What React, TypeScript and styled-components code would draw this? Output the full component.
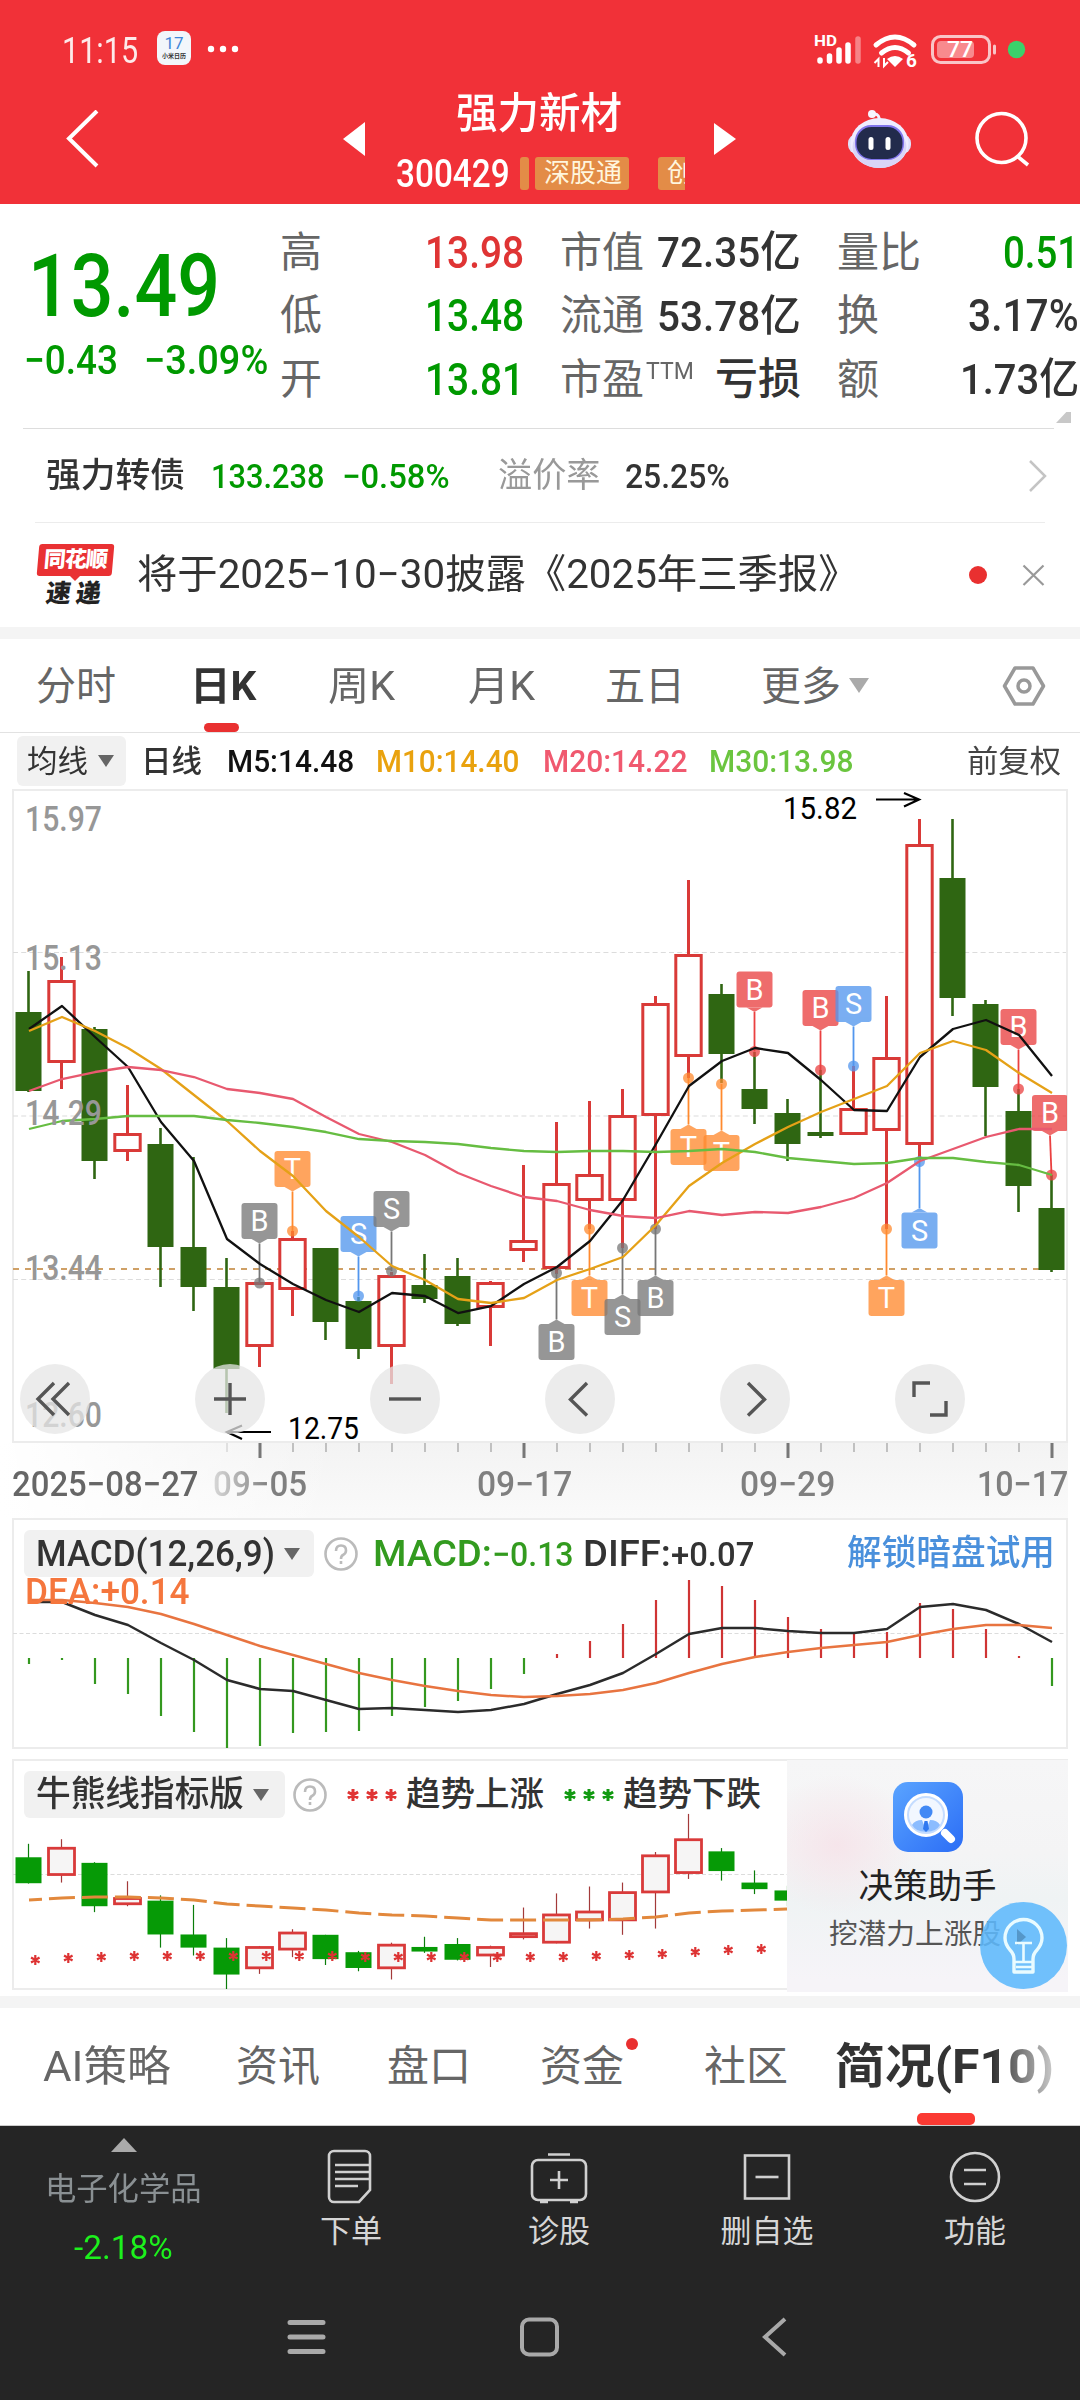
import React, { useLayoutEffect, useRef, useState } from "react";
import styled, { createGlobalStyle } from "styled-components";

const FONT = `Roboto, "Noto Sans CJK SC", sans-serif`;
const GREEN = "#009900";
const RED = "#df3434";
const INK = "#333333";
const GREY = "#666666";

const Global = createGlobalStyle`
  html, body { margin: 0; padding: 0; background: #fff; }
  * { box-sizing: border-box; }
  svg { display: block; flex: none; }
`;

/* ---------- text that is fitted to a fixed column width ---------- */

const FitBox = styled.span<{ $w: number; $size: number; $color?: string; $weight?: number; $ml?: number; $dy?: number }>`
  display: block;
  flex: none;
  width: ${(p) => p.$w}px;
  margin-left: ${(p) => p.$ml ?? 0}px;
  padding-top: ${(p) => (p.$dy && p.$dy > 0 ? p.$dy * 2 : 0)}px;
  padding-bottom: ${(p) => (p.$dy && p.$dy < 0 ? -p.$dy * 2 : 0)}px;
  font-size: ${(p) => p.$size}px;
  font-weight: ${(p) => p.$weight ?? 400};
  color: ${(p) => p.$color ?? "inherit"};
  line-height: 1;
  white-space: nowrap;
`;
const FitInner = styled.span`
  display: inline-block;
  transform-origin: 0 50%;
`;

type FitProps = {
  w: number;
  size: number;
  color?: string;
  weight?: number;
  ml?: number;
  dy?: number;
  children: React.ReactNode;
};

function Fit({ w, size, color, weight, ml, dy, children }: FitProps) {
  const ref = useRef<HTMLSpanElement>(null);
  const [scale, setScale] = useState(1);
  useLayoutEffect(() => {
    if (ref.current) setScale(w / ref.current.offsetWidth);
  }, [w, size, weight]);
  return (
    <FitBox $w={w} $size={size} $color={color} $weight={weight} $ml={ml} $dy={dy}>
      <FitInner ref={ref} style={{ transform: `scaleX(${scale})` }}>
        {children}
      </FitInner>
    </FitBox>
  );
}

/* ---------- shared layout ---------- */

const Screen = styled.div`
  width: 1080px;
  height: 2400px;
  overflow: hidden;
  display: flex;
  flex-direction: column;
  background: #fff;
  font-family: ${FONT};
  color: ${INK};
`;
const Line = styled.div<{ $h: number; $ml?: number; $w?: number; $c?: string }>`
  flex: none;
  height: ${(p) => p.$h}px;
  width: ${(p) => p.$w ?? 1080}px;
  margin-left: ${(p) => p.$ml ?? 0}px;
  background: ${(p) => p.$c ?? "#e2e2e2"};
`;
const Row = styled.div<{ $h: number; $pl?: number }>`
  flex: none;
  display: flex;
  align-items: center;
  height: ${(p) => p.$h}px;
  padding-left: ${(p) => p.$pl ?? 0}px;
`;
const Gap = styled.span<{ $w: number }>`
  flex: none;
  width: ${(p) => p.$w}px;
`;

/* ---------- header ---------- */

const Header = styled.header`
  flex: none;
  height: 204px;
  background: #f13138;
  color: #fff;
`;
const CalendarIcon = styled.span`
  display: flex;
  flex-direction: column;
  align-items: center;
  width: 34px;
  height: 34px;
  margin: 6px 0 0 19px;
  padding-top: 5px;
  border-radius: 8px;
  background: #f2f6fb;
  color: #3f86d8;
  font-size: 17px;
  line-height: 15px;
  small {
    color: #333;
    font-size: 6px;
    line-height: 9px;
    font-weight: 700;
  }
`;
const NavBar = styled.div`
  display: flex;
  height: 114px;
`;
const NavCell = styled.div<{ $w: number; $pl: number }>`
  display: flex;
  align-items: center;
  width: ${(p) => p.$w}px;
  height: 98px;
  padding-left: ${(p) => p.$pl}px;
`;
const TitleCol = styled.div`
  width: 304px;
`;
const TagStrip = styled.div`
  display: flex;
  width: 165px;
  height: 33px;
  margin-left: 10px;
  overflow: hidden;
`;
const Tag = styled.span<{ $w: number; $ml?: number; $pl?: number }>`
  flex: none;
  display: flex;
  align-items: center;
  width: ${(p) => p.$w}px;
  height: 33px;
  margin-left: ${(p) => p.$ml ?? 0}px;
  padding-left: ${(p) => p.$pl ?? 9}px;
  border-radius: 3px;
  background: #e38c47;
  color: #fff6de;
  font-size: 26px;
  line-height: 1;
  white-space: nowrap;
`;

function StatusBar() {
  return (
    <Row $h={90} $pl={62}>
      <Fit w={76} size={37} dy={5} color="#fdeaea">11:15</Fit>
      <CalendarIcon>17<small>小米日历</small></CalendarIcon>
      <Gap $w={16} />
      <svg width="34" height="90" viewBox="207 0 34 90" fill="#fff">
        <circle cx="211" cy="49" r="3.2" /><circle cx="223" cy="49" r="3.2" /><circle cx="235" cy="49" r="3.2" />
      </svg>
      <Gap $w={573} />
      <svg width="214" height="90" viewBox="814 0 214 90" fill="none">
        <text x="814" y="46" fontFamily="Roboto" fontSize="15" fontWeight="700" fill="#fff" textLength="23" lengthAdjust="spacingAndGlyphs">HD</text>
        <g stroke="#fff" strokeWidth="5.5" strokeLinecap="round">
          <path d="M820 60v1M829.500 56v5M839 50v11M848 45v16" />
          <path d="M858 39v22" opacity=".4" />
        </g>
        <g stroke="#fff" strokeWidth="5" strokeLinecap="round">
          <path d="M876 45q19-16 38 0" /><path d="M881.500 53q13.500-11 27 0" />
        </g>
        <path d="M887 59q8-6 16 0l-8 8z" fill="#fff" />
        <path d="M878.500 67v-8l-4 4M884 58v8l4-4" stroke="#fff" strokeWidth="2" />
        <text x="906" y="67" fontFamily="Roboto" fontSize="19" fontWeight="700" fill="#fff">6</text>
        <rect x="932.500" y="36.500" width="57" height="26" rx="8" stroke="#f9c5c7" strokeWidth="3" />
        <rect x="937" y="41" width="37" height="17" rx="4" fill="#f88a8e" />
        <path d="M994.500 46v7" stroke="#f9c5c7" strokeWidth="3" strokeLinecap="round" />
        <text x="947" y="57" fontFamily="Roboto" fontSize="22" fontWeight="500" fill="#fff" textLength="26" lengthAdjust="spacingAndGlyphs">77</text>
        <circle cx="1016.500" cy="49.500" r="8.700" fill="#3bd16b" />
      </svg>
    </Row>
  );
}

function Robot() {
  return (
    <svg width="64" height="62" viewBox="848 108 64 62">
      <path d="M879 121q1-7-5-7" stroke="#f3f0ff" strokeWidth="3" fill="none" />
      <circle cx="872" cy="114" r="4" fill="#f7f5ff" />
      <rect x="848" y="134" width="63" height="20" rx="9" fill="#dfe0fa" />
      <ellipse cx="879.500" cy="143" rx="29" ry="25" fill="#efedff" />
      <ellipse cx="879.500" cy="147" rx="27" ry="21" fill="#d9d5f7" />
      <rect x="855" y="125" width="49" height="35" rx="16" fill="#8175ec" />
      <rect x="856.500" y="127" width="46" height="32" rx="15" fill="#222b4c" />
      <rect x="868.500" y="137" width="5" height="13" rx="2.500" fill="#fff" />
      <rect x="885.500" y="137" width="5" height="13" rx="2.500" fill="#fff" />
    </svg>
  );
}

function TopHeader() {
  return (
    <Header>
      <StatusBar />
      <NavBar>
        <NavCell $w={343} $pl={65}>
          <svg width="34" height="58" viewBox="65 110 34 58" fill="none" stroke="#fff" strokeWidth="4">
            <path d="M97 111L69 138.500l28 27.500" />
          </svg>
        </NavCell>
        <NavCell $w={53} $pl={0}>
          <svg width="22" height="34" viewBox="0 0 22 30" preserveAspectRatio="none" fill="#fff"><path d="M22 0v30L0 15z" /></svg>
        </NavCell>
        <TitleCol>
          <Row $h={48} $pl={60}>
            <Fit w={166} size={42} weight={500}>强力新材</Fit>
          </Row>
          <Row $h={70}>
            <Fit w={114} size={38} weight={500} dy={1}>300429</Fit>
            <TagStrip>
              <Tag $w={9} />
              <Tag $w={94} $ml={6}>深股通</Tag>
              <Tag $w={94} $ml={29}>创业板</Tag>
            </TagStrip>
          </Row>
        </TitleCol>
        <NavCell $w={50} $pl={14}>
          <svg width="22" height="32" viewBox="0 0 22 30" preserveAspectRatio="none" fill="#fff"><path d="M0 0v30L22 15z" /></svg>
        </NavCell>
        <NavCell $w={224} $pl={98}><Robot /></NavCell>
        <NavCell $w={60} $pl={0}>
          <svg width="58" height="60" viewBox="974 110 58 60" fill="none" stroke="#fff" strokeWidth="3.600">
            <circle cx="1001.500" cy="139" r="24.500" /><path d="M1017 157l11 9" />
          </svg>
        </NavCell>
      </NavBar>
    </Header>
  );
}

/* ---------- quote ---------- */

const Quote = styled.section`
  flex: none;
  display: flex;
  height: 224px;
  padding-top: 17px;
`;
const PriceCol = styled.div`
  width: 280px;
  padding-top: 28px;
  color: ${GREEN};
`;
const MetricCol = styled.div<{ $w: number }>`
  flex: none;
  width: ${(p) => p.$w}px;
`;
const Metric = styled.div<{ $pr?: number }>`
  display: flex;
  align-items: center;
  justify-content: space-between;
  height: 63.5px;
  padding-right: ${(p) => p.$pr ?? 0}px;
`;
const Label = styled.span`
  display: flex;
  font-size: 42px;
  line-height: 1;
  color: ${GREY};
  white-space: nowrap;
`;

function QuotePanel() {
  return (
    <Quote>
      <PriceCol>
        <Row $h={72} $pl={28}><Fit w={192} size={87} weight={500} dy={1}>13.49</Fit></Row>
        <Row $h={75} $pl={24}>
          <Fit w={94} size={40} dy={2} weight={500}>−0.43</Fit>
          <Fit w={124} size={40} dy={2} weight={500} ml={26}>−3.09%</Fit>
        </Row>
      </PriceCol>
      <MetricCol $w={280}>
        <Metric $pr={36}><Label>高</Label><Fit w={99} size={44} weight={500} color={RED}>13.98</Fit></Metric>
        <Metric $pr={36}><Label>低</Label><Fit w={99} size={44} weight={500} color={GREEN}>13.48</Fit></Metric>
        <Metric $pr={36}><Label>开</Label><Fit w={99} size={44} weight={500} color={GREEN}>13.81</Fit></Metric>
      </MetricCol>
      <MetricCol $w={277}>
        <Metric $pr={36}><Label>市值</Label><Fit w={144} size={43} weight={500}>72.35亿</Fit></Metric>
        <Metric $pr={36}><Label>流通</Label><Fit w={144} size={43} weight={500}>53.78亿</Fit></Metric>
        <Metric $pr={36}><Label>市盈<Fit w={48} size={24} ml={2}>TTM</Fit></Label><Fit w={86} size={43} weight={500}>亏损</Fit></Metric>
      </MetricCol>
      <MetricCol $w={243}>
        <Metric $pr={1}><Label>量比</Label><Fit w={76} size={44} weight={500} color={GREEN}>0.51</Fit></Metric>
        <Metric $pr={1}><Label>换</Label><Fit w={111} size={44} weight={500}>3.17%</Fit></Metric>
        <Metric $pr={1}><Label>额</Label><Fit w={119} size={43} weight={500}>1.73亿</Fit></Metric>
        <svg width="240" height="16" viewBox="837 409 240 16"><path d="M1071 404v16h-15z" fill="#c8c8c8" /></svg>
      </MetricCol>
    </Quote>
  );
}

const Badge = styled.div`
  display: flex;
  flex-direction: column;
  align-items: center;
  width: 78px;
  height: 63px;
`;
const BadgeTop = styled.span`
  width: 75px;
  height: 32px;
  border-radius: 3px;
  background: #e93133;
  transform: skewX(-5deg);
  color: #fff;
  font-size: 22px;
  font-weight: 900;
  line-height: 31px;
  text-align: center;
  letter-spacing: -1px;
`;
const BadgeTip = styled.span`
  border: 5px solid transparent;
  border-top-color: #e93133;
  border-bottom-width: 0;
`;
const BadgeBottom = styled.span`
  margin: 0 0 0 2px;
  transform: skewX(-7deg);
  font-size: 25px;
  line-height: 26px;
  font-weight: 900;
  letter-spacing: 5px;
  color: #222;
`;

function InfoRows() {
  return (
    <>
      <Line $h={1} $ml={23} $w={1031} $c="#dddddd" />
      <Row $h={93} $pl={46}>
        <Fit w={139} size={34.500} weight={500}>强力转债</Fit>
        <Fit w={113} size={34} ml={26} weight={500} color={GREEN}>133.238</Fit>
        <Fit w={108} size={34} ml={18} weight={500} color={GREEN}>−0.58%</Fit>
        <Fit w={103} size={34.500} ml={48} color="#999">溢价率</Fit>
        <Fit w={105} size={34} ml={24} weight={500}>25.25%</Fit>
        <Gap $w={298} />
        <svg width="20" height="34" viewBox="0 0 20 34" fill="none" stroke="#c4c4c4" strokeWidth="2.500"><path d="M2 2l15 15L2 32" /></svg>
      </Row>
      <Line $h={1} $ml={35} $w={1010} $c="#ececec" />
      <Row $h={104} $pl={36}>
        <Badge><BadgeTop>同花顺</BadgeTop><BadgeTip /><BadgeBottom>速递</BadgeBottom></Badge>
        <Fit w={722} size={40} ml={23}>将于2025−10−30披露《2025年三季报》</Fit>
        <Gap $w={109} />
        <svg width="80" height="24" viewBox="968 562 80 24">
          <circle cx="978" cy="574" r="9" fill="#e93030" />
          <path d="M1023.500 564.500l20 19.500M1043.500 564.500l-20 19.500" stroke="#999" strokeWidth="2.200" />
        </svg>
      </Row>
    </>
  );
}

/* ---------- period tabs and averages ---------- */

const TabRow = styled.nav`
  position: relative;
  flex: none;
  display: flex;
  align-items: center;
  height: 93px;
  padding-left: 36px;
  color: ${GREY};
`;
const Underline = styled.i<{ $x: number; $w: number; $h: number; $c: string }>`
  position: absolute;
  bottom: 0;
  left: ${(p) => p.$x}px;
  width: ${(p) => p.$w}px;
  height: ${(p) => p.$h}px;
  border-radius: 5px;
  background: ${(p) => p.$c};
`;
const Picker = styled.button<{ $w: number; $h: number; $pl?: number }>`
  flex: none;
  display: flex;
  align-items: center;
  width: ${(p) => p.$w}px;
  height: ${(p) => p.$h}px;
  padding: 0 0 0 ${(p) => p.$pl ?? 12}px;
  border: 0;
  border-radius: 6px;
  background: #f1f1f1;
  color: ${INK};
  font-family: ${FONT};
  text-align: left;
`;
const Caret = styled.i<{ $c?: string; $s?: number; $ml?: number }>`
  flex: none;
  margin-left: ${(p) => p.$ml ?? 10}px;
  border-left: ${(p) => p.$s ?? 8}px solid transparent;
  border-right: ${(p) => p.$s ?? 8}px solid transparent;
  border-top: ${(p) => (p.$s ?? 8) * 1.5}px solid ${(p) => p.$c ?? "#666"};
`;

function PeriodTabs() {
  return (
    <TabRow>
      <Fit w={80} size={40} dy={1}>分时</Fit>
      <Fit w={66} size={40} dy={1} weight={700} ml={74} color={INK}>日K</Fit>
      <Fit w={67} size={40} dy={1} ml={72}>周K</Fit>
      <Fit w={67} size={40} dy={1} ml={73}>月K</Fit>
      <Fit w={80} size={40} dy={1} ml={70}>五日</Fit>
      <Fit w={80} size={40} dy={1} ml={76}>更多</Fit>
      <Caret $c="#aaa" $s={10} $ml={8} />
      <Gap $w={132} />
      <svg width="46" height="44" viewBox="0 0 46 44" fill="none" stroke="#999" strokeWidth="3.500">
        <path d="M14 4h18l10.500 18L32 40H14L3.500 22z" strokeLinejoin="round" /><circle cx="23" cy="22" r="6" />
      </svg>
      <Underline $x={204} $w={35} $h={9} $c="#e93030" />
    </TabRow>
  );
}

function AverageRow() {
  return (
    <Row $h={56} $pl={17}>
      <Picker $w={109} $h={50} $pl={10}><Fit w={61} size={31}>均线</Fit><Caret /></Picker>
      <Fit w={61} size={31} weight={500} ml={15}>日线</Fit>
      <Fit w={127} size={32} weight={500} ml={25} color="#111">M5:14.48</Fit>
      <Fit w={143} size={32} weight={500} ml={22} color="#e9a20e">M10:14.40</Fit>
      <Fit w={144} size={32} weight={500} ml={24} color="#f0596f">M20:14.22</Fit>
      <Fit w={144} size={32} weight={500} ml={22} color="#6bc53f">M30:13.98</Fit>
      <Fit w={94} size={31} ml={114} color="#444">前复权</Fit>
    </Row>
  );
}

/* ---------- candle chart ---------- */

const cx = (i: number) => 28.5 + 33 * i;

/* rising flag, high, body top, body bottom, low */
const CANDLES: [number, number, number, number, number][] = [
  [0, 971, 1012, 1091, 1092], [1, 957, 980, 1063, 1089], [0, 1027, 1029, 1161, 1179], [1, 1085, 1133, 1152, 1161],
  [0, 1128, 1144, 1247, 1287], [0, 1157, 1247, 1287, 1311], [0, 1258, 1287, 1369, 1413], [1, 1282, 1282, 1347, 1367],
  [1, 1231, 1238, 1290, 1316], [0, 1248, 1248, 1322, 1340], [0, 1297, 1301, 1349, 1359], [1, 1272, 1275, 1347, 1384],
  [0, 1254, 1285, 1299, 1303], [0, 1258, 1276, 1324, 1326], [1, 1281, 1282, 1308, 1346], [1, 1165, 1240, 1251, 1262],
  [1, 1122, 1183, 1269, 1274], [1, 1101, 1174, 1201, 1229], [1, 1089, 1115, 1201, 1248], [1, 996, 1003, 1116, 1229],
  [1, 880, 954, 1057, 1078], [0, 984, 994, 1054, 1083], [0, 1052, 1089, 1109, 1124], [0, 1099, 1113, 1144, 1161],
  [0, 1070, 1132, 1136, 1138], [1, 1066, 1108, 1135, 1135], [1, 996, 1057, 1131, 1229], [1, 819, 844, 1145, 1160],
  [0, 819, 878, 998, 1016], [0, 1000, 1004, 1087, 1136], [0, 1089, 1111, 1186, 1212], [0, 1175, 1208, 1270, 1272],
];
const M5 = [1029, 1006, 1037, 1067, 1122, 1161, 1239, 1264, 1284, 1300, 1312, 1293, 1296, 1313, 1306, 1284, 1267, 1241, 1200, 1144, 1086, 1061, 1048, 1053, 1080, 1110, 1111, 1057, 1029, 1020, 1035, 1076];
const M10 = [1031, 1017, 1031, 1048, 1069, 1095, 1121, 1151, 1176, 1211, 1237, 1266, 1280, 1299, 1303, 1298, 1280, 1269, 1257, 1225, 1186, 1163, 1144, 1127, 1112, 1099, 1086, 1053, 1041, 1050, 1073, 1093];
const M20 = [1091, 1079, 1072, 1067, 1070, 1077, 1089, 1093, 1099, 1117, 1134, 1142, 1155, 1173, 1186, 1197, 1201, 1210, 1216, 1218, 1211, 1215, 1212, 1213, 1207, 1198, 1183, 1161, 1149, 1137, 1129, 1129];
const M30 = [1129, 1121, 1119, 1116, 1116, 1116, 1120, 1123, 1127, 1132, 1139, 1141, 1142, 1144, 1148, 1151, 1152, 1151, 1151, 1152, 1151, 1149, 1152, 1158, 1161, 1164, 1163, 1158, 1158, 1162, 1165, 1175];

const PINS: [number, string, string, number, boolean][] = [
  [7, "B", "#777777", 1283, true], [8, "T", "#ff8a2e", 1231, true], [10, "S", "#5296ee", 1296, true],
  [11, "S", "#777777", 1271, true], [16, "B", "#777777", 1273, false], [17, "T", "#ff8a2e", 1229, false],
  [18, "S", "#777777", 1248, false], [19, "B", "#777777", 1229, false], [20, "T", "#ff8a2e", 1078, false],
  [21, "T", "#ff8a2e", 1084, false], [22, "B", "#ea4040", 1051.5, true], [24, "B", "#ea4040", 1070, true],
  [25, "S", "#5296ee", 1066, true], [26, "T", "#ff8a2e", 1229, false], [27, "S", "#5296ee", 1161.5, false],
  [30, "B", "#ea4040", 1089, true], [31, "B", "#ea4040", 1175, true],
];

const pts = (ys: number[]) => ys.map((y, i) => `${cx(i) + 0.5},${y}`).join(" ");

const ChartBox = styled.section<{ $h: number }>`
  position: relative;
  flex: none;
  width: 1056px;
  height: ${(p) => p.$h}px;
  margin-left: 12px;
  border: 2px solid #ececec;
  > svg { position: absolute; left: -2px; top: -2px; }
`;
const Controls = styled.div`
  position: absolute;
  left: 6px;
  bottom: 7px;
  display: flex;
  gap: 105px;
`;
const RoundButton = styled.button`
  display: flex;
  align-items: center;
  justify-content: center;
  width: 70px;
  height: 70px;
  padding: 0;
  border: 0;
  border-radius: 50%;
  background: rgba(230, 230, 230, 0.75);
`;
const CONTROL_PATHS = [
  "M19 4L3 20l16 16M34 4L18 20l16 16",
  "M20 4v32M4 20h32",
  "M4 20h32",
  "M27 4L10.500 20.500l16.500 16",
  "M13 4l16.500 16.500-16.500 16",
  "M4 18V4h16M36 22v14H20",
];

function PinMark({ pin }: { pin: [number, string, string, number, boolean] }) {
  const [i, letter, color, dot, above] = pin;
  const x = cx(i);
  const bx = i === 31 ? x - 1.5 : x;
  const top = above ? dot - 80 : dot + 51;
  const tip = above ? top + 40.5 : top - 4.5;
  const base = above ? top + 36 : top;
  return (
    <g>
      <circle cx={x} cy={dot} r="5.500" fill={color} opacity=".75" />
      <path d={`M${bx} ${tip}L${x} ${dot}`} stroke={color} strokeWidth="1.800" />
      <g opacity=".77">
        <rect x={bx - 18} y={top} width="36" height="36" rx="3" fill={color} />
        <path d={`M${bx - 8} ${base}h16L${bx} ${tip}z`} fill={color} />
      </g>
      <text x={bx} y={top + 28} textAnchor="middle" fontFamily="Roboto" fontSize="29" fill="#fff">{letter}</text>
    </g>
  );
}

function CandleChart() {
  return (
    <ChartBox $h={654}>
      <svg width="1055" height="654" viewBox="12 789 1055 654" fill="none">
        <g stroke="#dcdcdc" strokeWidth="1.200" strokeDasharray="5 3.200">
          <path d="M13 952.500H1066M13 1116H1066M13 1279.500H1066" />
        </g>
        <path d="M13 1269H1066" stroke="#cfa066" strokeWidth="2" strokeDasharray="6 6" />
        {CANDLES.map(([up, hi, top, bot, lo], i) =>
          up ? (
            <g key={i} stroke="#d93a38" strokeWidth="3">
              <path d={`M${cx(i)} ${hi}V${top}M${cx(i)} ${bot}V${lo}`} />
              <rect x={cx(i) - 12.7} y={top + 1.5} width="25.400" height={Math.max(bot - top - 3, 1)} fill="#fff" />
            </g>
          ) : (
            <g key={i} fill="#2f6612">
              <path d={`M${cx(i)} ${hi}V${lo}`} stroke="#2f6612" strokeWidth="2.600" />
              <rect x={cx(i) - 13} y={top} width="26" height={bot - top} />
            </g>
          )
        )}
        {PINS.map((p, k) => <PinMark key={k} pin={p} />)}
        <g strokeWidth="2.300" strokeLinejoin="round">
          <polyline points={pts(M5)} stroke="#111" />
          <polyline points={pts(M10)} stroke="#e5a117" />
          <polyline points={pts(M20)} stroke="#e8596f" />
          <polyline points={pts(M30)} stroke="#66bd42" />
        </g>
        <g fontFamily="Roboto" fontSize="35" fontWeight="500" fill="#979797">
          {([["15.97", 831], ["15.13", 970], ["14.29", 1124.5], ["13.44", 1280], ["12.60", 1427]] as [string, number][]).map(([t, y]) => (
            <text key={t} x="25" y={y} textLength="77" lengthAdjust="spacingAndGlyphs">{t}</text>
          ))}
        </g>
        <g fontFamily="Roboto" fontSize="31" fill="#000">
          <text x="783" y="819" textLength="74" lengthAdjust="spacingAndGlyphs">15.82</text>
          <text x="288" y="1439" textLength="71" lengthAdjust="spacingAndGlyphs">12.75</text>
        </g>
        <g stroke="#000" strokeWidth="2.200">
          <path d="M876 799.500h43M904 793l15 6.500-15 7" />
          <path d="M271 1432h-43M242 1425.500l-15 6.500 15 7" />
        </g>
      </svg>
      <Controls>
        {CONTROL_PATHS.map((d, i) => (
          <RoundButton key={i}>
            <svg width="40" height="40" viewBox="0 0 40 40" fill="none" stroke="#555" strokeWidth="3.400"><path d={d} /></svg>
          </RoundButton>
        ))}
      </Controls>
    </ChartBox>
  );
}

const Axis = styled.div`
  flex: none;
  height: 75px;
  margin-right: 12px;
  background: linear-gradient(90deg, #fff 0, rgba(255, 255, 255, 0) 340px), linear-gradient(#f3f3f3, #fafafa);
`;
const AxisDates = styled.div`
  display: flex;
  height: 42px;
  margin-top: 2px;
  align-items: center;
  padding-left: 12px;
  color: #7f7f7f;
`;
const Fading = styled.span`
  background: linear-gradient(90deg, #d8d8d8, #7f7f7f 60%);
  background-clip: text;
  -webkit-background-clip: text;
  color: transparent;
`;

function DateAxis() {
  const ticks = Array.from({ length: 26 }, (_, k) => k + 6);
  return (
    <Axis>
      <svg width="1067" height="18" viewBox="0 1443 1067 18">
        {ticks.map((i) => {
          const major = (i - 7) % 8 === 0;
          return <path key={i} d={`M${cx(i) + 0.5} 1443v${major ? 15 : 9}`} stroke={major ? "#777" : i === 6 ? "#ddd" : "#bbb"} strokeWidth={major ? 3 : 1.8} />;
        })}
      </svg>
      <AxisDates>
        <Fit w={187} size={35} weight={500} color="#666">2025−08−27</Fit>
        <Fit w={94} size={35} weight={500} ml={14}><Fading>09−05</Fading></Fit>
        <Fit w={95} size={35} weight={500} ml={170}>09−17</Fit>
        <Fit w={95} size={35} weight={500} ml={168}>09−29</Fit>
        <Fit w={91} size={35} weight={500} ml={142}>10−17</Fit>
      </AxisDates>
    </Axis>
  );
}

/* ---------- MACD ---------- */

const BARS = [1664, 1660, 1684, 1694, 1716, 1732, 1748, 1746, 1733, 1732, 1731, 1716, 1707, 1701, 1689, 1674, 1654, 1641, 1624, 1600, 1580, 1586, 1600, 1617, 1629, 1634, 1632, 1603, 1609, 1629, 1656, 1686];
const DIFF = [1602, 1602, 1615, 1625, 1643, 1660, 1680, 1689, 1691, 1700, 1709, 1708, 1710, 1712, 1710, 1704, 1694, 1685, 1673, 1654, 1634, 1628, 1628, 1631, 1633, 1633, 1629, 1607, 1604, 1610, 1624, 1642];
const DEA = [1600, 1600, 1603, 1607, 1614, 1624, 1635, 1646, 1655, 1664, 1673, 1680, 1686, 1691, 1695, 1697, 1696, 1694, 1690, 1683, 1673, 1664, 1657, 1652, 1648, 1645, 1642, 1635, 1629, 1625, 1625, 1628];

const Legend = styled.div`
  position: relative;
  display: flex;
  align-items: center;
  height: 47px;
  margin: 10px 0 0 10px;
`;
const LegendNext = styled.div`
  position: relative;
  margin: -3px 0 0 11px;
`;

function Help({ ml = 10 }: { ml?: number }) {
  return (
    <>
      <Gap $w={ml} />
      <svg width="34" height="34" viewBox="0 0 34 34" fill="none" stroke="#bbb" strokeWidth="2.600">
        <circle cx="17" cy="17" r="15.500" />
        <path d="M12 14q0-5.500 5-5.500t5 5q0 3-3 4.500-2 1-2 4M17 24v3" />
      </svg>
    </>
  );
}

function MacdPanel() {
  return (
    <ChartBox $h={231}>
      <svg width="1055" height="231" viewBox="12 1518 1055 231" fill="none">
        <path d="M13 1633.500H1066" stroke="#dcdcdc" strokeWidth="1.200" strokeDasharray="4 2.500" />
        {BARS.map((y, i) => <path key={i} d={`M${cx(i) + 0.5} 1658V${y}`} stroke={y > 1658 ? "#34981f" : "#cf3434"} strokeWidth="2.200" />)}
        <polyline points={pts(DIFF)} stroke="#2b2b2b" strokeWidth="2.500" strokeLinejoin="round" />
        <polyline points={pts(DEA)} stroke="#e87440" strokeWidth="2.500" strokeLinejoin="round" />
      </svg>
      <Legend>
        <Picker $w={290} $h={47}><Fit w={239} size={36} weight={500}>MACD(12,26,9)</Fit><Caret $ml={9} /></Picker>
        <Help />
        <Fit w={119} size={36} weight={500} ml={15} color="#339b1f">MACD:</Fit>
        <Fit w={82} size={34} weight={500} ml={0} color="#339b1f">−0.13</Fit>
        <Fit w={88} size={36} weight={500} ml={9}>DIFF:</Fit>
        <Fit w={83} size={34} weight={500}>+0.07</Fit>
        <Fit w={208} size={35} weight={500} ml={93} color="#4a90dc">解锁暗盘试用</Fit>
      </Legend>
      <LegendNext><Fit w={165} size={36} weight={500} color="#f5763d">DEA:+0.14</Fit></LegendNext>
    </ChartBox>
  );
}

/* ---------- bull / bear line ---------- */

const TREND = [1900, 1898, 1897, 1897, 1898, 1900, 1904, 1906, 1908, 1910, 1913, 1915, 1916, 1918, 1920, 1920, 1920, 1920, 1919, 1917, 1913, 1911, 1910, 1909];
const STARS = [1960, 1958, 1957, 1956, 1956, 1956, 1956, 1956, 1956, 1956, 1957, 1957, 1957, 1957, 1957, 1957, 1957, 1956, 1955, 1954, 1952, 1950, 1949];
const small = (y: number) => 1989 - (1413 - y) * 0.3285;
const star = (x: number, y: number, r: number) =>
  `M${x} ${y - r}v${2 * r}M${x - r * 0.85} ${y - r * 0.5}l${r * 1.7} ${r}M${x - r * 0.85} ${y + r * 0.5}l${r * 1.7} ${-r}`;

const Promo = styled.aside`
  position: absolute;
  top: -1px;
  right: -2px;
  display: flex;
  flex-direction: column;
  align-items: center;
  width: 281px;
  height: 232px;
  padding-top: 22px;
  background:
    radial-gradient(ellipse 80px 70px at 50px 85px, rgba(246, 224, 231, 0.75), rgba(246, 236, 240, 0)),
    linear-gradient(#f6f6f7 0, #f4f4f5 40%, #eff3f4 60%, #f6f4f8 95%);
`;
const PromoTitle = styled.div`
  margin-top: 15px;
  font-size: 34.5px;
  line-height: 38px;
  color: #222;
`;
const PromoSub = styled.div`
  margin: 14px 0 0 -25px;
  font-size: 28.7px;
  line-height: 30px;
  color: #555;
  white-space: nowrap;
`;
const Bulb = styled.div`
  position: absolute;
  right: 1px;
  bottom: 3px;
  width: 87px;
  height: 87px;
  border-radius: 50%;
  background: rgba(93, 184, 252, 0.88);
`;

function Stars({ color }: { color: string }) {
  return (
    <svg width="52" height="16" viewBox="0 0 52 16" fill="none" stroke={color} strokeWidth="3">
      <path d={star(6, 8, 6) + star(25, 8, 6) + star(44, 8, 6)} />
    </svg>
  );
}

function TrendPanel() {
  return (
    <ChartBox $h={231}>
      <svg width="775" height="231" viewBox="12 1759 775 231" fill="none">
        <path d="M13 1874.500H787" stroke="#dcdcdc" strokeWidth="1.200" strokeDasharray="4 2.500" />
        {CANDLES.slice(0, 24).map(([up, hi, top, bot, lo], i) =>
          up ? (
            <g key={i}>
              <path d={`M${cx(i)} ${small(hi)}V${small(lo)}`} stroke="#a33a3a" strokeWidth="1.200" />
              <rect x={cx(i) - 13} y={small(top) + 1.5} width="26" height={Math.max(small(bot) - small(top) - 1, 3)} fill="#f6f5f5" stroke="#d93a3a" strokeWidth="2.800" />
            </g>
          ) : (
            <g key={i} fill="#069a06">
              <path d={`M${cx(i)} ${small(hi)}V${small(lo)}`} stroke="#0a7d0a" strokeWidth="1.200" />
              <rect x={cx(i) - 13} y={small(top)} width="26" height={Math.max(small(bot) - small(top), 4)} />
            </g>
          )
        )}
        <polyline points={pts(TREND)} stroke="#e2883c" strokeWidth="3" strokeDasharray="26 7" strokeDashoffset="13" />
        <path d={STARS.map((y, i) => star(35.3 + 33 * i, y, 5)).join("")} stroke="#dd3333" strokeWidth="2.200" />
      </svg>
      <Legend>
        <Picker $w={261} $h={47}><Fit w={208} size={35} weight={500}>牛熊线指标版</Fit><Caret $ml={9} /></Picker>
        <Help ml={8} />
        <Gap $w={20} />
        <Stars color="#e03434" />
        <Fit w={138} size={34.500} weight={500} ml={7}>趋势上涨</Fit>
        <Gap $w={20} />
        <Stars color="#129a12" />
        <Fit w={138} size={34.500} weight={500} ml={7}>趋势下跌</Fit>
      </Legend>
      <Promo>
        <svg width="70" height="70" viewBox="0 0 70 70" fill="none">
          <defs>
            <linearGradient id="tile" x1="0" y1="0" x2="1" y2="1"><stop stopColor="#5aa4ff" /><stop offset="1" stopColor="#2b6df6" /></linearGradient>
          </defs>
          <rect width="70" height="70" rx="15" fill="url(#tile)" />
          <path d="M52 51l6 6" stroke="#fff" strokeWidth="8" strokeLinecap="round" />
          <circle cx="33" cy="33" r="20.500" fill="#c4dcff" stroke="#fff" strokeWidth="3" />
          <circle cx="33" cy="33" r="17" fill="#f2f7ff" />
          <circle cx="33" cy="30" r="6.500" fill="#4289f5" />
          <path d="M19 43q3-5 10-5l4 10 4-10q7 0 10 5-4 7-14 7t-14-7z" fill="#8bbcff" />
          <path d="M31.500 39h3l1.500 8-3 3-3-3z" fill="#2f78f0" />
        </svg>
        <PromoTitle>决策助手</PromoTitle>
        <PromoSub>挖潜力上涨股</PromoSub>
        <Bulb>
          <svg width="87" height="87" viewBox="0 0 87 87" fill="none">
            <path d="M37 27l9 8-9 8z" fill="#4a86b4" opacity=".7" />
            <g stroke="#e9fbff" strokeWidth="3.400" strokeLinejoin="round">
              <path d="M34 57q0-5-4-9-5-6-5-12a18.500 18.500 0 0137 0q0 6-5 12-4 4-4 9v13H34z" />
              <path d="M35 60h18M43.500 59V41M35 41h17M36 65h16" strokeWidth="2.600" />
            </g>
          </svg>
        </Bulb>
      </Promo>
    </ChartBox>
  );
}

/* ---------- section tabs, toolbar, system keys ---------- */

const SectionTabs = styled.nav`
  position: relative;
  flex: none;
  display: flex;
  align-items: center;
  height: 117px;
  padding-left: 43px;
  color: ${GREY};
`;
const FadeTitle = styled.span`
  background: linear-gradient(90deg, #333 72%, #ccc 100%);
  background-clip: text;
  -webkit-background-clip: text;
  color: transparent;
`;
const NewDot = styled.i`
  flex: none;
  width: 12px;
  height: 12px;
  margin: 0 0 46px 2px;
  border-radius: 50%;
  background: #e93030;
`;
const Dock = styled.footer`
  flex: none;
  height: 274px;
  background: #252525;
  color: #d6d6d6;
`;
const DockRow = styled.div`
  display: flex;
  height: 154px;
`;
const Sector = styled.div`
  display: flex;
  flex-direction: column;
  align-items: center;
  width: 247px;
  padding-top: 12px;
  color: #8a9093;
`;
const UpMark = styled.i`
  margin-bottom: 22px;
  border: 13px solid transparent;
  border-top: 0;
  border-bottom: 14px solid #aaa;
`;
const SectorChange = styled.div`
  margin-top: 24px;
`;
const Tool = styled.div`
  display: flex;
  flex-direction: column;
  align-items: center;
  width: 208px;
  padding-top: 22px;
  font-size: 31px;
  line-height: 1;
  svg { margin-bottom: 10px; }
`;
const Keys = styled.div`
  display: flex;
  align-items: center;
  height: 113px;
  padding-left: 287px;
`;

const TOOLS: [string, React.ReactNode][] = [
  ["下单", <><path key="a" d="M12 3h31a5 5 0 015 5v34L37 54H12a5 5 0 01-5-5V8a5 5 0 015-5z" /><path key="b" d="M13 17h34M13 24h34M13 31h34M13 38h23" /></>],
  ["诊股", <><rect key="a" x="2" y="12" width="54" height="40" rx="6" /><path key="b" d="M18 6.500h22M29 23v18M20 32h18M10 54h8M40 54h8" /></>],
  ["删自选", <><rect key="a" x="7" y="7.500" width="44" height="43" /><path key="b" d="M17.500 29h23" /></>],
  ["功能", <><circle key="a" cx="29" cy="29" r="24" /><path key="b" d="M18 22h22M18 36h22" /></>],
];

function BottomDock() {
  return (
    <Dock>
      <DockRow>
        <Sector>
          <UpMark />
          <Fit w={157} size={31.500}>电子化学品</Fit>
          <SectorChange><Fit w={99} size={34} color="#1df01d">-2.18%</Fit></SectorChange>
        </Sector>
        {TOOLS.map(([name, icon]) => (
          <Tool key={name}>
            <svg width="58" height="58" viewBox="0 0 58 58" fill="none" stroke="#d0d0d0" strokeWidth="2.600">{icon}</svg>
            {name}
          </Tool>
        ))}
      </DockRow>
      <Keys>
        <svg width="500" height="50" viewBox="288 2313 500 50" fill="none" stroke="#a9a9a9" strokeWidth="4">
          <path d="M291 2323.500h33M291 2338h33M291 2352.500h33" strokeWidth="5" strokeLinecap="round" />
          <rect x="523" y="2320.500" width="35" height="35" rx="7" />
          <path d="M786 2320l-20 18 20 18" />
        </svg>
      </Keys>
    </Dock>
  );
}

export default function App() {
  return (
    <>
      <Global />
      <Screen>
        <TopHeader />
        <QuotePanel />
        <InfoRows />
        <Line $h={12} $c="#f4f4f4" />
        <PeriodTabs />
        <Line $h={1} />
        <AverageRow />
        <CandleChart />
        <DateAxis />
        <MacdPanel />
        <Line $h={10} $c="#fff" />
        <TrendPanel />
        <Line $h={6} $c="#fff" />
        <Line $h={12} $c="#f4f4f4" />
        <SectionTabs>
          <Fit w={128} size={42}>AI策略</Fit>
          <Fit w={84} size={42} ml={65}>资讯</Fit>
          <Fit w={84} size={42} ml={67}>盘口</Fit>
          <Fit w={84} size={42} ml={69}>资金</Fit>
          <NewDot />
          <Fit w={84} size={42} ml={66}>社区</Fit>
          <Fit w={219} size={48} weight={700} ml={47}><FadeTitle>简况(F10)</FadeTitle></Fit>
          <Underline $x={917} $w={58} $h={12} $c="#fb3a33" />
        </SectionTabs>
        <Line $h={1} $c="#cccccc" />
        <BottomDock />
      </Screen>
    </>
  );
}
